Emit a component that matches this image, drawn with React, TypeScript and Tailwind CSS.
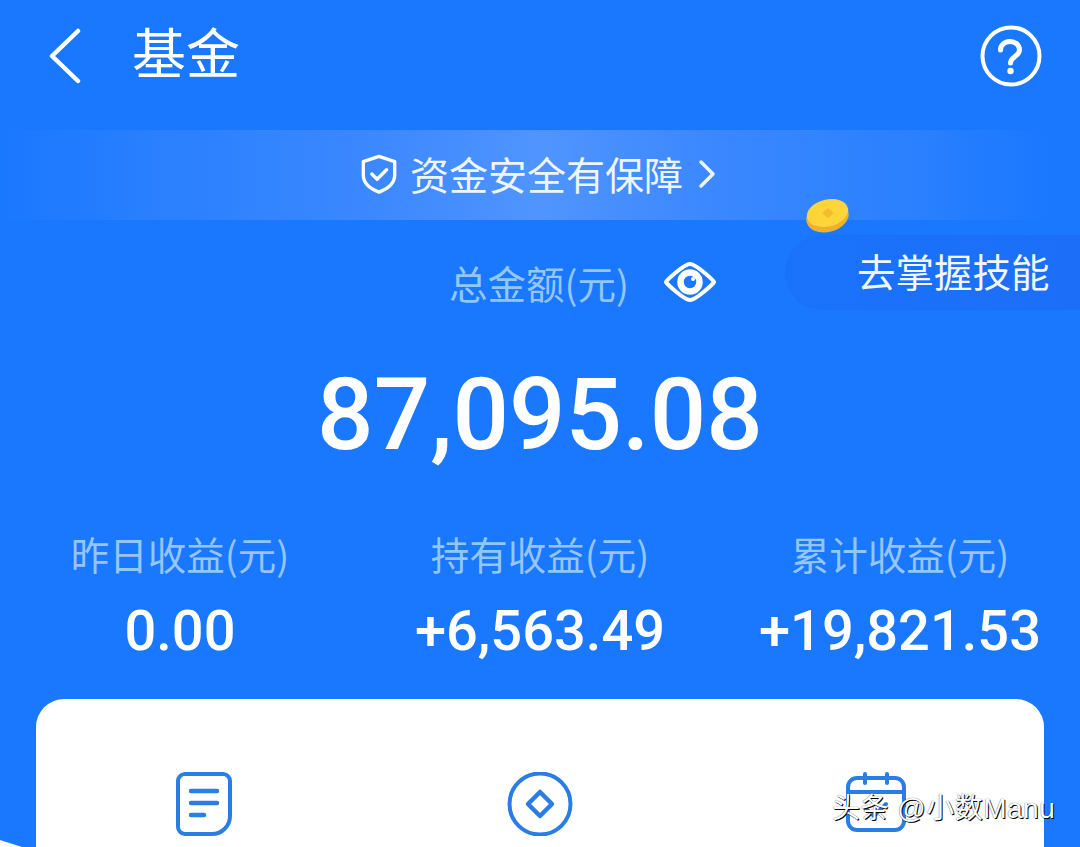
import React from 'react';

const cjk = 'font-["Noto_Sans_CJK_SC",sans-serif]';

const Stat = ({ label, value }: { label: string; value: string }) => (
  <div className="flex flex-col items-center">
    <div className={`${cjk} text-[38.5px] leading-[44px] text-[#93c5ff]`}>{label}</div>
    <div className='font-["Roboto",sans-serif] font-medium text-[56px] leading-[64px] mt-[24px] text-white whitespace-nowrap'>{value}</div>
  </div>
);

const Coin = () => (
  <svg className="absolute left-[805px] top-[197px]" width="45" height="37" viewBox="0 0 45 37">
    <ellipse cx="22.500" cy="20" rx="21.500" ry="15" transform="rotate(-14 22.500 20)" fill="#eeb02e" />
    <ellipse cx="22.500" cy="16" rx="21" ry="13.500" transform="rotate(-14 22.500 16)" fill="#fdd538" />
    <path d="M17 16l6-5 6 5-6 5z" fill="#f3bb30" />
  </svg>
);

export default function App() {
  return (
    <div className="relative w-[1080px] h-[847px] overflow-hidden bg-[#1a78ff] text-white">
      {/* header */}
      <div className="flex items-center justify-between h-[115px] pl-[48px] pr-[38px] pb-[3px]">
        <div className="flex items-center">
          <svg width="34" height="56" viewBox="0 0 34 56" fill="none" stroke="white" strokeWidth="4.500" strokeLinecap="round" strokeLinejoin="round">
            <path d="M30 3 L4 28 L30 53" />
          </svg>
          <span className={`${cjk} text-[54px] leading-[64px] ml-[50px] mb-[10px]`}>基金</span>
        </div>
        <svg width="62" height="62" viewBox="0 0 62 62" fill="none" stroke="white" strokeLinecap="round">
          <circle cx="31" cy="31" r="28.500" strokeWidth="4" />
          <path d="M20.500 25c0-5 4-8.500 9.500-8.500s9.500 3.500 9.500 8.500c0 6.500-9 6.500-9 13" strokeWidth="5" />
          <circle cx="30.500" cy="46" r="3.200" fill="white" stroke="none" />
        </svg>
      </div>

      {/* safety banner */}
      <div className="flex items-center justify-center h-[90px] mt-[15px] pr-[4px] pb-[2px] bg-[linear-gradient(90deg,#1a78ff_0%,#2a80ff_15%,#3c88ff_35%,#5095ff_50%,#3c88ff_65%,#2a80ff_85%,#1a78ff_97%)]">
        <svg width="38" height="40" viewBox="0 0 38 42" fill="none" stroke="white" strokeWidth="3.500" strokeLinecap="round" strokeLinejoin="round">
          <path d="M19 2.500 L35.500 8 V22 C35.500 31 28 36.500 19 40 C10 36.500 2.500 31 2.500 22 V8 Z" />
          <path d="M11.500 21 L17 26.500 L27 16.500" />
        </svg>
        <span className={`${cjk} text-[39px] leading-[44px] ml-[12px] pb-[2px] text-[#eef5ff]`}>资金安全有保障</span>
        <svg className="ml-[15px]" width="18" height="30" viewBox="0 0 18 30" fill="none" stroke="#eef5ff" strokeWidth="3.500" strokeLinecap="round" strokeLinejoin="round">
          <path d="M3 3 L15 15 L3 27" />
        </svg>
      </div>

      {/* total */}
      <div className="flex items-center justify-center h-[60px] mt-[32px] pl-[86px]">
        <span className={`${cjk} text-[38.5px] leading-[44px] text-[#93c5ff]`}>总金额(元)</span>
        <svg className="ml-[34px]" width="54" height="42" viewBox="0 0 54 42" fill="none" stroke="white">
          <path d="M3 21 C4 19 21 3 27 3 C33 3 50 19 51 21 C50 23 33 39 27 39 C21 39 4 23 3 21 Z" strokeWidth="4" strokeLinejoin="round" />
          <circle cx="27" cy="21" r="9.500" strokeWidth="6.500" />
          <circle cx="30" cy="18" r="2" fill="white" stroke="none" />
        </svg>
      </div>
      <div className='font-["Roboto",sans-serif] font-medium text-[99.5px] leading-[110px] text-center mt-[48px]'>87,095.08</div>

      {/* stats */}
      <div className="grid grid-cols-3 mt-[61px]">
        <Stat label="昨日收益(元)" value="0.00" />
        <Stat label="持有收益(元)" value="+6,563.49" />
        <Stat label="累计收益(元)" value="+19,821.53" />
      </div>

      {/* card */}
      <div className="mx-[36px] mt-[36px] h-[200px] rounded-t-[28px] bg-white">
        <div className="grid grid-cols-3 pt-[73px]">
          <div className="flex justify-center">
            <svg width="56" height="64" viewBox="0 0 56 64" fill="none" stroke="#2a7de4" strokeWidth="4" strokeLinecap="round" strokeLinejoin="round">
              <path d="M9 2 H47 A7 7 0 0 1 54 9 V44 A18 18 0 0 1 36 62 H9 A7 7 0 0 1 2 55 V9 A7 7 0 0 1 9 2 Z" />
              <path d="M15 19 H41" strokeWidth="4.500" />
              <path d="M15 31 H41" strokeWidth="4.500" />
              <path d="M15 43 H28" strokeWidth="4.500" />
            </svg>
          </div>
          <div className="flex justify-center">
            <svg width="66" height="64" viewBox="0 0 66 64" fill="none" stroke="#2a7de4" strokeLinejoin="round">
              <circle cx="33" cy="32" r="30.500" strokeWidth="4" />
              <path d="M33 20 L45 32 L33 44 L21 32 Z" strokeWidth="4.500" />
            </svg>
          </div>
          <div className="flex justify-center">
            <svg width="60" height="60" viewBox="0 0 60 60" fill="none" stroke="#2a7de4" strokeWidth="4" strokeLinecap="round" strokeLinejoin="round">
              <path d="M11 6 H49 A9 9 0 0 1 58 15 V49 A9 9 0 0 1 49 58 H11 A9 9 0 0 1 2 49 V15 A9 9 0 0 1 11 6 Z" />
              <path d="M2 20 H58" />
              <path d="M19 2 V11" />
              <path d="M41 2 V11" />
              <path d="M20 37 L28 44 L40 32" />
            </svg>
          </div>
        </div>
      </div>

      <Coin />
      <div className="absolute left-[785px] top-[235px] w-[295px] h-[75px] rounded-l-[37px] bg-[linear-gradient(90deg,#1a72fb,#1c6ef8)] pl-[72px] pb-[5px] flex items-center">
        <span className={`${cjk} text-[38.5px] leading-[46px] text-[#f2f7ff] whitespace-nowrap`}>去掌握技能</span>
      </div>

      {/* corner left by the crop */}
      <div className="absolute left-0 top-[840px] w-[22px] h-[7px] bg-white [clip-path:polygon(0_0,100%_100%,0_100%)]" />

      {/* watermark */}
      <div className='absolute left-[832px] top-[791px] font-["Liberation_Sans","Noto_Sans_CJK_SC",sans-serif] text-[28px] tracking-[0.5px] leading-[36px] text-white whitespace-nowrap [text-shadow:1px_1px_0_#000,0_0_1px_rgba(0,0,0,0.8)]'>头条 @小数Manu</div>
    </div>
  );
}
